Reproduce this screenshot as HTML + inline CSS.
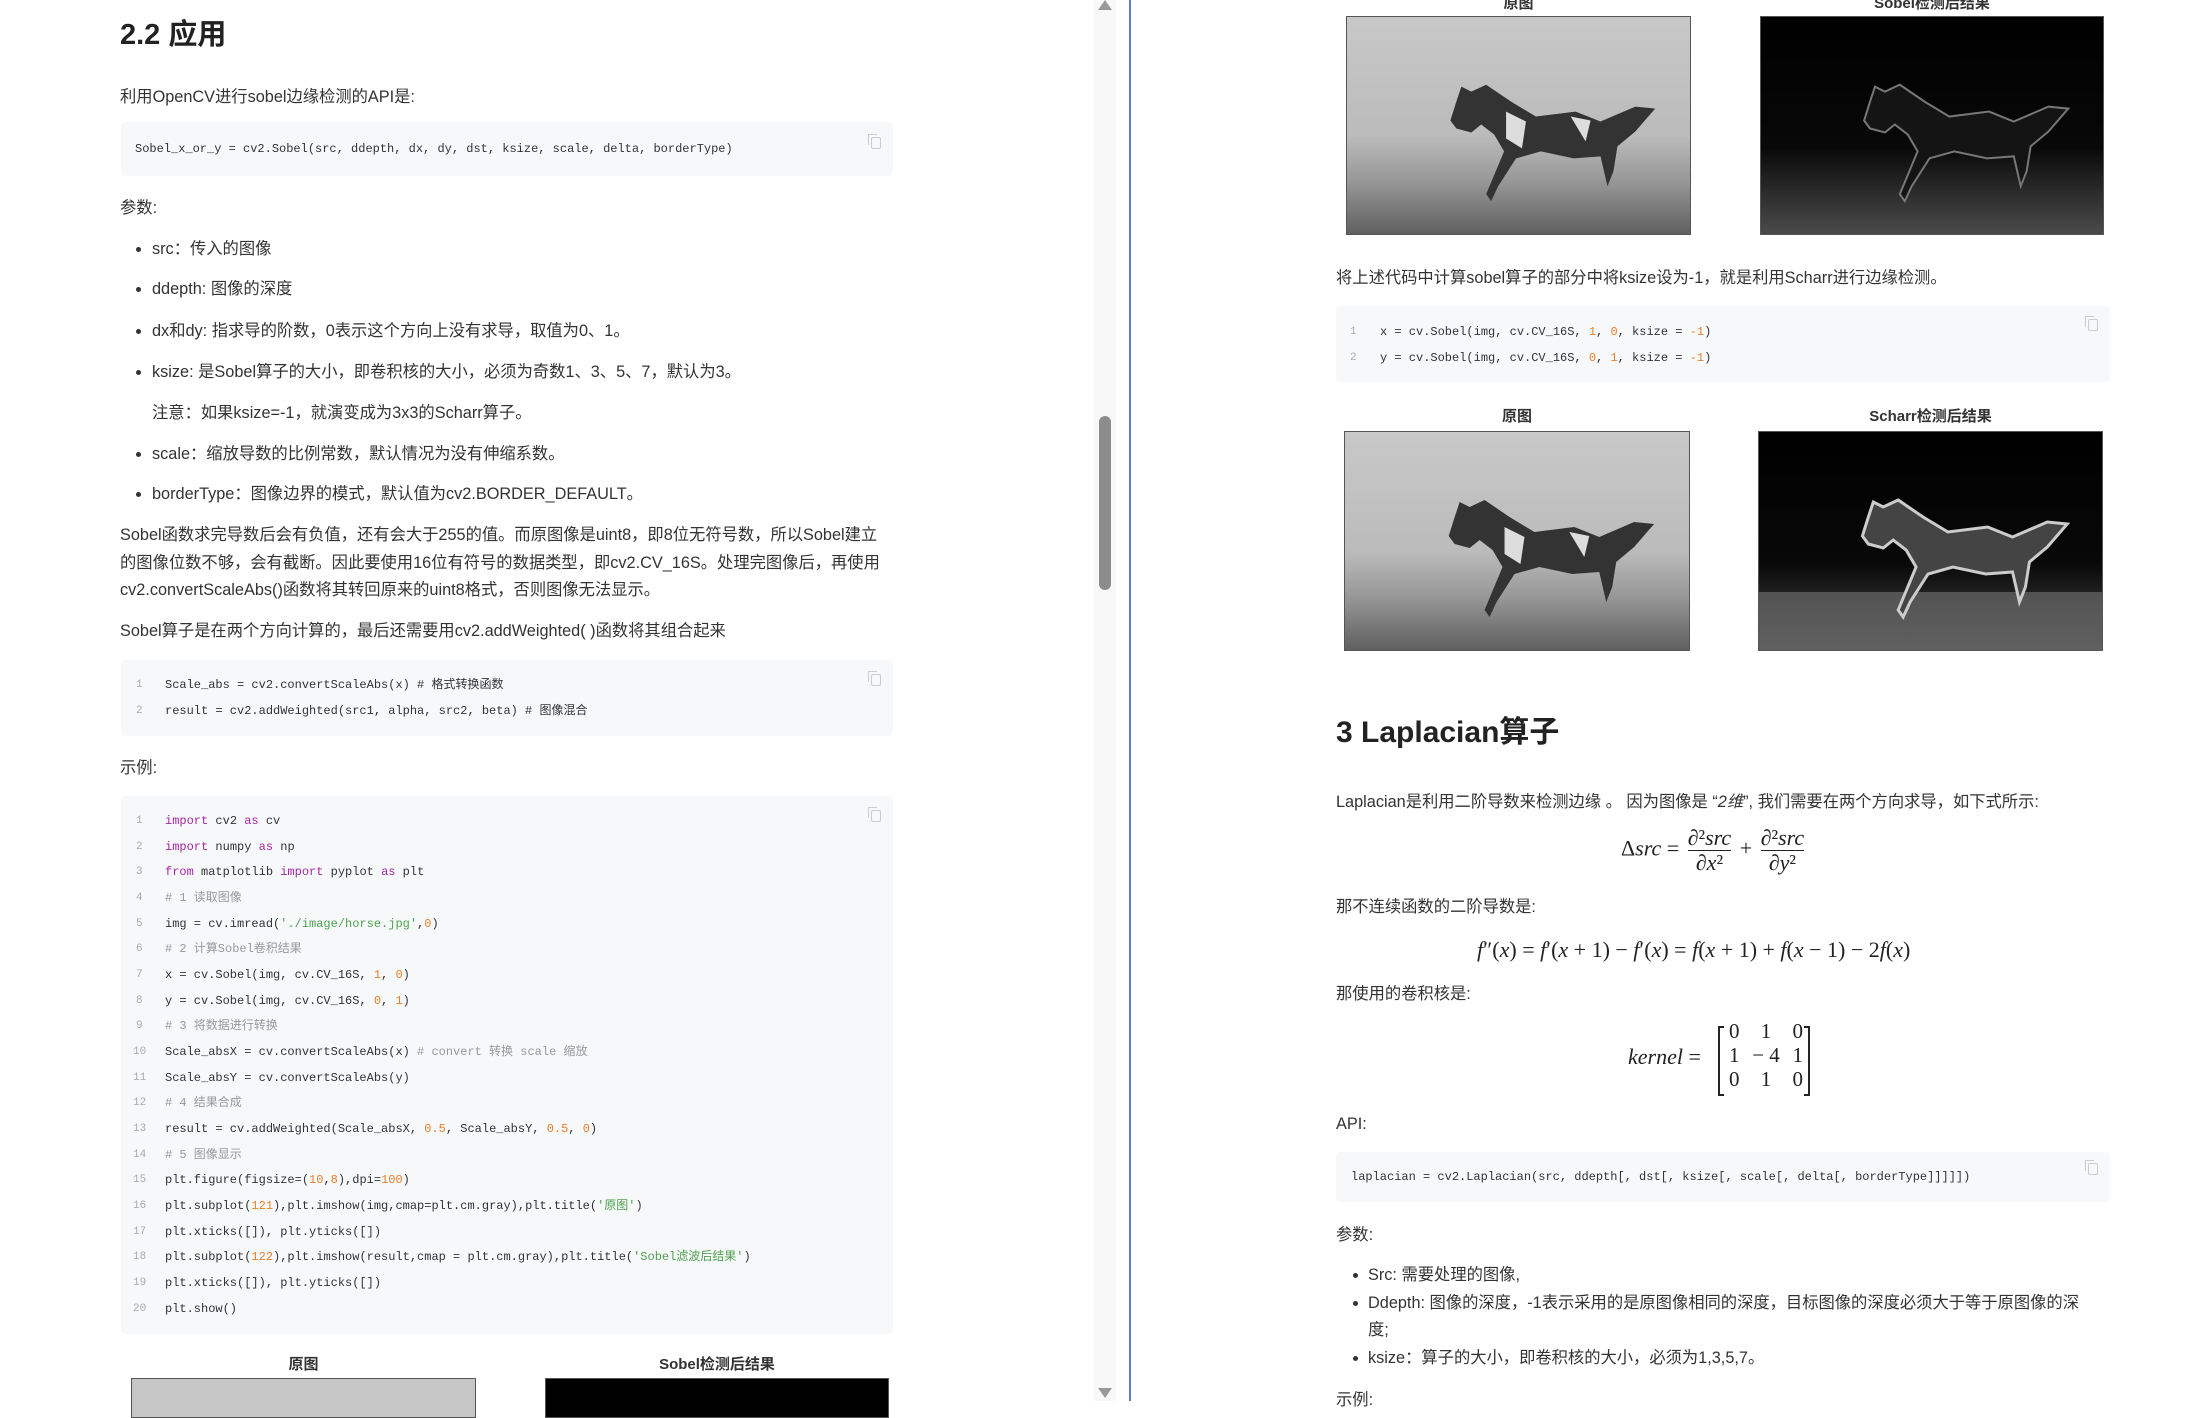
<!DOCTYPE html>
<html><head><meta charset="utf-8">
<style>
*{margin:0;padding:0;box-sizing:border-box}
body{width:2191px;height:1401px;overflow:hidden;background:#fff;position:relative;font-family:"Liberation Sans","Noto Sans CJK SC",sans-serif;color:#333;font-size:16.3px}
.t{position:absolute;line-height:24px;white-space:nowrap}
.h{font-weight:bold;color:#222;font-size:29px;line-height:40px}
.code{position:absolute;background:#f6f8fa;border-radius:4px}
.c{position:absolute;font-family:"Liberation Mono","Noto Sans CJK SC",monospace;font-size:12px;line-height:20px;white-space:nowrap;color:#333}
.n{position:absolute;font-family:"Liberation Mono",monospace;font-size:11px;line-height:20px;color:#aaa}
.k{color:#a626a4}.s{color:#50a14f}.m{color:#e8802d}.g{color:#999}
.cp{position:absolute;width:10px;height:12px;border:1.5px solid #ccc;border-radius:2px}
.cp:before{content:"";position:absolute;left:-4px;top:-4px;width:8px;height:10px;border-left:1.5px solid #ccc;border-top:1.5px solid #ccc}
.dot{position:absolute;width:5px;height:5px;border-radius:50%;background:#333}
.lab{position:absolute;font-size:15px;font-weight:bold;color:#333;text-align:center;line-height:20px}
.img{position:absolute;border:1.5px solid #555}
.math{position:absolute;font-family:"Liberation Serif","DejaVu Serif",serif;font-size:22px;white-space:nowrap;color:#222}
.math i{font-style:italic}
.fr{display:inline-block;vertical-align:middle;text-align:center;margin:0 3px}
.fr span{display:block;line-height:24px}
.fr span:first-child{border-bottom:1px solid #222}
.wrap{position:absolute;top:0;left:0;width:2191px;height:1401px}
</style></head><body>
<svg width="0" height="0" style="position:absolute">
<defs>
<linearGradient id="sky" x1="0" y1="0" x2="0" y2="1"><stop offset="0" stop-color="#c8c8c8"/><stop offset="0.55" stop-color="#bbb"/><stop offset="0.75" stop-color="#999"/><stop offset="1" stop-color="#606060"/></linearGradient>
<linearGradient id="dk" x1="0" y1="0" x2="0" y2="1"><stop offset="0" stop-color="#000"/><stop offset="0.6" stop-color="#080808"/><stop offset="0.8" stop-color="#2a2a2a"/><stop offset="1" stop-color="#4a4a4a"/></linearGradient>
<symbol id="horse" viewBox="0 0 345 218">
<path d="M110 85 L115 70 L125 75 L140 68 L165 85 L190 100 L230 95 L255 105 L290 90 L310 92 L290 115 L272 130 L268 155 L262 170 L255 140 L228 142 L195 135 L170 142 L152 170 L145 185 L140 178 L158 135 L148 118 L135 108 L125 116 L110 112 L104 104 Z"/>
</symbol>
</defs></svg>

<!-- LEFT -->
<div class="t h" style="left:120px;top:15px">2.2 应用</div>
<div class="t" style="left:120px;top:85px">利用OpenCV进行sobel边缘检测的API是:</div>
<div class="code" style="left:121px;top:122px;width:772px;height:54px"></div>
<div class="c" style="left:135px;top:139px">Sobel_x_or_y = cv2.Sobel(src, ddepth, dx, dy, dst, ksize, scale, delta, borderType)</div>
<div class="cp" style="left:871px;top:137px"></div>
<div class="t" style="left:120px;top:196px">参数:</div>
<div class="dot" style="left:136px;top:247px"></div><div class="t" style="left:152px;top:237px">src：传入的图像</div>
<div class="dot" style="left:136px;top:287px"></div><div class="t" style="left:152px;top:277px">ddepth: 图像的深度</div>
<div class="dot" style="left:136px;top:329px"></div><div class="t" style="left:152px;top:319px">dx和dy: 指求导的阶数，0表示这个方向上没有求导，取值为0、1。</div>
<div class="dot" style="left:136px;top:370px"></div><div class="t" style="left:152px;top:360px">ksize: 是Sobel算子的大小，即卷积核的大小，必须为奇数1、3、5、7，默认为3。</div>
<div class="t" style="left:152px;top:401px">注意：如果ksize=-1，就演变成为3x3的Scharr算子。</div>
<div class="dot" style="left:136px;top:452px"></div><div class="t" style="left:152px;top:442px">scale：缩放导数的比例常数，默认情况为没有伸缩系数。</div>
<div class="dot" style="left:136px;top:492px"></div><div class="t" style="left:152px;top:482px">borderType：图像边界的模式，默认值为cv2.BORDER_DEFAULT。</div>
<div class="t" style="left:120px;top:523px">Sobel函数求完导数后会有负值，还有会大于255的值。而原图像是uint8，即8位无符号数，所以Sobel建立</div>
<div class="t" style="left:120px;top:551px">的图像位数不够，会有截断。因此要使用16位有符号的数据类型，即cv2.CV_16S。处理完图像后，再使用</div>
<div class="t" style="left:120px;top:578px">cv2.convertScaleAbs()函数将其转回原来的uint8格式，否则图像无法显示。</div>
<div class="t" style="left:120px;top:619px">Sobel算子是在两个方向计算的，最后还需要用cv2.addWeighted( )函数将其组合起来</div>
<div class="code" style="left:121px;top:660px;width:772px;height:76px"></div>
<div class="cp" style="left:871px;top:674px"></div>
<div class="n" style="left:136px;top:675px">1</div><div class="c" style="left:165px;top:675px">Scale_abs = cv2.convertScaleAbs(x)  # 格式转换函数</div>
<div class="n" style="left:136px;top:701px">2</div><div class="c" style="left:165px;top:701px">result = cv2.addWeighted(src1, alpha, src2, beta) # 图像混合</div>
<div class="t" style="left:120px;top:756px">示例:</div>
<div class="code" style="left:121px;top:796px;width:772px;height:538px"></div>
<div class="cp" style="left:871px;top:810px"></div>
<div class="n" style="left:136px;top:811px">1</div><div class="c" style="left:165px;top:811px"><span class="k">import</span> cv2 <span class="k">as</span> cv</div>
<div class="n" style="left:136px;top:837px">2</div><div class="c" style="left:165px;top:837px"><span class="k">import</span> numpy <span class="k">as</span> np</div>
<div class="n" style="left:136px;top:862px">3</div><div class="c" style="left:165px;top:862px"><span class="k">from</span> matplotlib <span class="k">import</span> pyplot <span class="k">as</span> plt</div>
<div class="n" style="left:136px;top:888px">4</div><div class="c g" style="left:165px;top:888px"># 1 读取图像</div>
<div class="n" style="left:136px;top:914px">5</div><div class="c" style="left:165px;top:914px">img = cv.imread(<span class="s">'./image/horse.jpg'</span>,<span class="m">0</span>)</div>
<div class="n" style="left:136px;top:939px">6</div><div class="c g" style="left:165px;top:939px"># 2 计算Sobel卷积结果</div>
<div class="n" style="left:136px;top:965px">7</div><div class="c" style="left:165px;top:965px">x = cv.Sobel(img, cv.CV_16S, <span class="m">1</span>, <span class="m">0</span>)</div>
<div class="n" style="left:136px;top:991px">8</div><div class="c" style="left:165px;top:991px">y = cv.Sobel(img, cv.CV_16S, <span class="m">0</span>, <span class="m">1</span>)</div>
<div class="n" style="left:136px;top:1016px">9</div><div class="c g" style="left:165px;top:1016px"># 3 将数据进行转换</div>
<div class="n" style="left:133px;top:1042px">10</div><div class="c" style="left:165px;top:1042px">Scale_absX = cv.convertScaleAbs(x)  <span class="g"># convert 转换  scale 缩放</span></div>
<div class="n" style="left:133px;top:1068px">11</div><div class="c" style="left:165px;top:1068px">Scale_absY = cv.convertScaleAbs(y)</div>
<div class="n" style="left:133px;top:1093px">12</div><div class="c g" style="left:165px;top:1093px"># 4 结果合成</div>
<div class="n" style="left:133px;top:1119px">13</div><div class="c" style="left:165px;top:1119px">result = cv.addWeighted(Scale_absX, <span class="m">0.5</span>, Scale_absY, <span class="m">0.5</span>, <span class="m">0</span>)</div>
<div class="n" style="left:133px;top:1145px">14</div><div class="c g" style="left:165px;top:1145px"># 5 图像显示</div>
<div class="n" style="left:133px;top:1170px">15</div><div class="c" style="left:165px;top:1170px">plt.figure(figsize=(<span class="m">10</span>,<span class="m">8</span>),dpi=<span class="m">100</span>)</div>
<div class="n" style="left:133px;top:1196px">16</div><div class="c" style="left:165px;top:1196px">plt.subplot(<span class="m">121</span>),plt.imshow(img,cmap=plt.cm.gray),plt.title(<span class="s">'原图'</span>)</div>
<div class="n" style="left:133px;top:1222px">17</div><div class="c" style="left:165px;top:1222px">plt.xticks([]), plt.yticks([])</div>
<div class="n" style="left:133px;top:1247px">18</div><div class="c" style="left:165px;top:1247px">plt.subplot(<span class="m">122</span>),plt.imshow(result,cmap = plt.cm.gray),plt.title(<span class="s">'Sobel滤波后结果'</span>)</div>
<div class="n" style="left:133px;top:1273px">19</div><div class="c" style="left:165px;top:1273px">plt.xticks([]), plt.yticks([])</div>
<div class="n" style="left:133px;top:1299px">20</div><div class="c" style="left:165px;top:1299px">plt.show()</div>
<div class="lab" style="left:131px;width:345px;top:1355px">原图</div>
<div class="lab" style="left:545px;width:344px;top:1355px">Sobel检测后结果</div>
<div class="img" style="left:131px;top:1378px;width:345px;height:40px;background:#c6c6c6"></div>
<div class="img" style="left:545px;top:1378px;width:344px;height:40px;background:#000"></div>

<!-- scrollbar & divider -->
<div style="position:absolute;left:1094px;top:0;width:22px;height:1401px;background:#f8f8f8"></div>
<div style="position:absolute;left:1099px;top:416px;width:12px;height:174px;border-radius:6px;background:#8c8c8c"></div>
<div style="position:absolute;left:1098px;top:0;width:0;height:0;border-left:7px solid transparent;border-right:7px solid transparent;border-bottom:10px solid #999"></div>
<div style="position:absolute;left:1098px;top:1388px;width:0;height:0;border-left:7px solid transparent;border-right:7px solid transparent;border-top:10px solid #999"></div>
<div style="position:absolute;left:1129px;top:0;width:2px;height:1401px;background:#5b7fcf"></div>

<!-- RIGHT -->
<div class="wrap" style="left:-7px">
<div class="lab" style="left:1353px;width:345px;top:-6px">原图</div>
<div class="lab" style="left:1767px;width:344px;top:-6px">Sobel检测后结果</div>
<svg class="img" style="left:1353px;top:16px" width="345" height="219" viewBox="0 0 345 218" preserveAspectRatio="none"><rect width="345" height="218" fill="url(#sky)"/><use href="#horse" fill="#333"/><path d="M160 95 L180 105 L176 132 L160 122 Z M225 100 L245 104 L240 125 Z" fill="#ddd"/></svg>
<svg class="img" style="left:1767px;top:16px" width="344" height="219" viewBox="0 0 345 218" preserveAspectRatio="none"><rect width="345" height="218" fill="url(#dk)"/><use href="#horse" fill="#141414" stroke="#777" stroke-width="2"/></svg>
<div class="t" style="left:1343px;top:266px">将上述代码中计算sobel算子的部分中将ksize设为-1，就是利用Scharr进行边缘检测。</div>
<div class="code" style="left:1343px;top:306px;width:774px;height:76px"></div>
<div class="cp" style="left:2095px;top:319px"></div>
<div class="n" style="left:1357px;top:322px">1</div><div class="c" style="left:1387px;top:322px">x = cv.Sobel(img, cv.CV_16S, <span class="m">1</span>, <span class="m">0</span>, ksize = <span class="m">-1</span>)</div>
<div class="n" style="left:1357px;top:348px">2</div><div class="c" style="left:1387px;top:348px">y = cv.Sobel(img, cv.CV_16S, <span class="m">0</span>, <span class="m">1</span>, ksize = <span class="m">-1</span>)</div>
<div class="lab" style="left:1351px;width:346px;top:407px">原图</div>
<div class="lab" style="left:1765px;width:345px;top:407px">Scharr检测后结果</div>
<svg class="img" style="left:1351px;top:431px" width="346" height="220" viewBox="0 0 345 218" preserveAspectRatio="none"><rect width="345" height="218" fill="url(#sky)"/><use href="#horse" fill="#333"/><path d="M160 95 L180 105 L176 132 L160 122 Z M225 100 L245 104 L240 125 Z" fill="#ddd"/></svg>
<svg class="img" style="left:1765px;top:431px" width="345" height="220" viewBox="0 0 345 218" preserveAspectRatio="none"><rect width="345" height="218" fill="url(#dk)"/><rect y="160" width="345" height="58" fill="#6a6a6a" opacity=".7"/><use href="#horse" fill="#444" stroke="#ccc" stroke-width="3"/></svg>
<div class="t h" style="left:1343px;top:713px;font-size:30px">3 Laplacian算子</div>
<div class="t" style="left:1343px;top:790px">Laplacian是利用二阶导数来检测边缘 。 因为图像是 “<i>2维</i>”, 我们需要在两个方向求导，如下式所示:</div>
<div class="math" style="left:1628px;top:826px">Δ<i>src</i> = <span class="fr"><span>∂²<i>src</i></span><span>∂<i>x</i>²</span></span> + <span class="fr"><span>∂²<i>src</i></span><span>∂<i>y</i>²</span></span></div>
<div class="t" style="left:1343px;top:895px">那不连续函数的二阶导数是:</div>
<div class="math" style="left:1484px;top:937px"><i>f</i>″(<i>x</i>) = <i>f</i>′(<i>x</i> + 1) − <i>f</i>′(<i>x</i>) = <i>f</i>(<i>x</i> + 1) + <i>f</i>(<i>x</i> − 1) − 2<i>f</i>(<i>x</i>)</div>
<div class="t" style="left:1343px;top:982px">那使用的卷积核是:</div>
<div class="math" style="left:1635px;top:1044px"><i>kernel</i> =</div>
<div style="position:absolute;left:1725px;top:1026px;width:92px;height:70px;border:2px solid #222;border-top:none;border-bottom:none"></div>
<div style="position:absolute;left:1725px;top:1026px;width:6px;height:70px;border-top:2px solid #222;border-bottom:2px solid #222"></div>
<div style="position:absolute;left:1811px;top:1026px;width:6px;height:70px;border-top:2px solid #222;border-bottom:2px solid #222"></div>
<div class="math" style="left:1733px;top:1019px;line-height:24px;font-size:21px;width:80px"><div style="display:flex;justify-content:space-between;padding:0 3px"><span>0</span><span>1</span><span>0</span></div><div style="display:flex;justify-content:space-between;padding:0 3px"><span>1</span><span>− 4</span><span>1</span></div><div style="display:flex;justify-content:space-between;padding:0 3px"><span>0</span><span>1</span><span>0</span></div></div>
<div class="t" style="left:1343px;top:1112px">API:</div>
<div class="code" style="left:1343px;top:1152px;width:774px;height:50px"></div>
<div class="cp" style="left:2095px;top:1163px"></div>
<div class="c" style="left:1358px;top:1167px">laplacian = cv2.Laplacian(src, ddepth[, dst[, ksize[, scale[, delta[, borderType]]]]])</div>
<div class="t" style="left:1343px;top:1223px">参数:</div>
<div class="dot" style="left:1360px;top:1273px"></div><div class="t" style="left:1375px;top:1263px">Src: 需要处理的图像,</div>
<div class="dot" style="left:1360px;top:1301px"></div><div class="t" style="left:1375px;top:1291px">Ddepth: 图像的深度，-1表示采用的是原图像相同的深度，目标图像的深度必须大于等于原图像的深</div>
<div class="t" style="left:1375px;top:1318px">度;</div>
<div class="dot" style="left:1360px;top:1356px"></div><div class="t" style="left:1375px;top:1346px">ksize：算子的大小，即卷积核的大小，必须为1,3,5,7。</div>
<div class="t" style="left:1343px;top:1388px">示例:</div>
</div>
</body></html>
